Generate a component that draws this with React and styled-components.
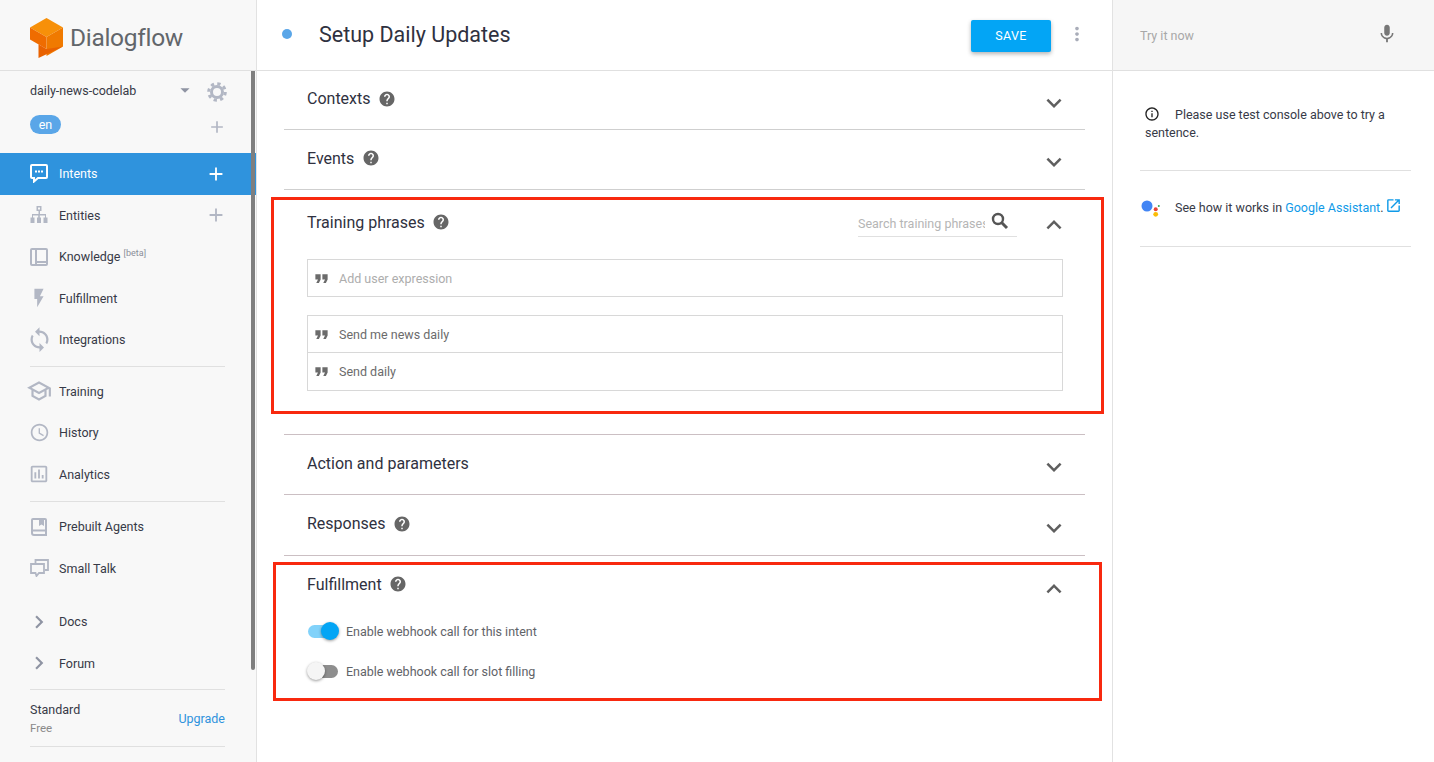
import React from "react";
import styled, { createGlobalStyle } from "styled-components";
import {
    MdAdd,
    MdArrowDropDown,
    MdChevronRight,
    MdExpandLess,
    MdExpandMore,
    MdFlashOn,
    MdFormatQuote,
    MdHelp,
    MdInfoOutline,
    MdMic,
    MdMoreVert,
    MdOpenInNew,
    MdOutlineAccessTime,
    MdOutlineAssessment,
    MdOutlineSchool,
    MdSync,
} from "react-icons/md";

const Logo = () => (
    <svg width="34" height="42" viewBox="0 0 34 42">
        <path d="M16.5 0 33 9.5 16.5 19 0 9.5z" fill="#f79009" />
        <path d="M0 9.5 16.5 19v12L0 21.5z" fill="#ef6c00" />
        <path d="M33 9.5V28.5L16.5 38V19z" fill="#f07a00" />
        <path d="M33 28.5 8.5 40V26.2l8 4.8z" fill="#e96200" />
    </svg>
);

const GearIcon = () => (
    <svg width="20" height="20" viewBox="0 0 20 20" fill="none" stroke="#b2b7c4">
        <circle cx="10" cy="10" r="5.500" strokeWidth="3" />
        <circle cx="10" cy="10" r="8.300" strokeWidth="3" strokeDasharray="3.300 3.220" />
    </svg>
);

const BubbleIcon = () => (
    <svg width="18" height="19" viewBox="0 0 18 19" fill="none" stroke="#fff" strokeWidth="2">
        <path d="M2 1h14a1 1 0 0 1 1 1v11a1 1 0 0 1-1 1H8l-4 3.500V14H2a1 1 0 0 1-1-1V2a1 1 0 0 1 1-1z" />
        <path d="M5 7.500h2M8 7.500h2M11 7.500h2" strokeWidth="2" />
    </svg>
);

const EntitiesIcon = () => (
    <svg width="20" height="20" viewBox="0 0 20 20" fill="#b2b7c4">
        <path d="M7.500 1h5v5H11v3h6v3.500h1.500V18h-4v-5.500H16V10.500h-5.200v2H12V18H8v-5.500h1.200v-2H4v2h1.500V18h-4v-5.500H3V9h6.500V6h-2zM9 2.500v2h2v-2z" />
    </svg>
);

const KnowledgeIcon = () => (
    <svg width="18" height="18" viewBox="0 0 18 18" fill="none" stroke="#b2b7c4" strokeWidth="2">
        <rect x="1" y="1" width="16" height="16" rx="1" />
        <path d="M6 1v16" />
        <path d="M6 14h11" />
    </svg>
);

const BookIcon = () => (
    <svg width="16" height="18" viewBox="0 0 16 18" fill="none" stroke="#b2b7c4" strokeWidth="2">
        <path d="M2 1h12a1 1 0 0 1 1 1v15H3a2 2 0 0 1-2-2V2a1 1 0 0 1 1-1z" />
        <path d="M1.500 12.500H15" />
        <path d="M8 1h5v7l-2.500-1.500L8 8z" fill="#b2b7c4" stroke="none" />
    </svg>
);

const TalkIcon = () => (
    <svg width="19" height="18" viewBox="0 0 19 18" fill="none" stroke="#b2b7c4" strokeWidth="1.800">
        <path d="M5.500 4V1h12.500v10h-3" />
        <path d="M1 5h13v9H9l-2.500 3-1-3H1z" />
    </svg>
);

const AssistantIcon = () => (
    <svg width="20" height="20" viewBox="0 0 20 20">
        <circle cx="6" cy="6" r="5.500" fill="#4285f4" />
        <circle cx="14.700" cy="9.300" r="2" fill="#ea4335" />
        <circle cx="14.700" cy="14.300" r="2.400" fill="#fbbc05" />
        <circle cx="17.800" cy="6" r="1" fill="#34a853" />
    </svg>
);

const SearchIcon = () => (
    <svg width="18" height="18" viewBox="0 0 18 18" fill="none" stroke="#555">
        <circle cx="7" cy="7" r="5" strokeWidth="2.400" />
        <path d="M10.800 10.800 16 16" strokeWidth="3" />
    </svg>
);

function NavRow({ label, icon, add, active }) {
    return (
        <Row $active={active}>
            <RowIcon $active={active}>{icon}</RowIcon>
            <RowLabel>{label}</RowLabel>
            {add && (
                <RowAdd $active={active}>
                    <MdAdd size={22} />
                </RowAdd>
            )}
        </Row>
    );
}

function Section({ title, head = 59, top, drop = 8, open, marked, noHelp, extra, children }) {
    return (
        <SectionBox $marked={marked}>
            <SectionHead $top={top} $height={head}>
                <SectionTitle>{title}</SectionTitle>
                {!noHelp && <MdHelp size={18} color="#666" />}
                <HeadRight>
                    {extra}
                    <Chevron $drop={drop}>
                        {open ? <MdExpandLess size={30} /> : <MdExpandMore size={30} />}
                    </Chevron>
                </HeadRight>
            </SectionHead>
            {children}
        </SectionBox>
    );
}

function Phrase({ text, muted }) {
    return (
        <PhraseRow>
            <QuoteMark>
                <MdFormatQuote size={21} />
            </QuoteMark>
            <PhraseText $muted={muted}>{text}</PhraseText>
        </PhraseRow>
    );
}

function App() {
    return (
        <>
            <GlobalStyle />
            <Page>
                <Sidebar>
                    <Brand>
                        <LogoSlot>
                            <Logo />
                        </LogoSlot>
                        <BrandName>Dialogflow</BrandName>
                    </Brand>
                    <AgentRow>
                        <AgentName>daily-news-codelab</AgentName>
                        <MdArrowDropDown size={22} color="#8f94a3" />
                        <Gear>
                            <GearIcon />
                        </Gear>
                    </AgentRow>
                    <LangRow>
                        <LangPill>en</LangPill>
                        <LangAdd>
                            <MdAdd size={20} />
                        </LangAdd>
                    </LangRow>
                    <NavRow label="Intents" icon={<BubbleIcon />} add active />
                    <NavRow label="Entities" icon={<EntitiesIcon />} add />
                    <NavRow
                        label={
                            <>
                                Knowledge <Beta>[beta]</Beta>
                            </>
                        }
                        icon={<KnowledgeIcon />}
                    />
                    <NavRow label="Fulfillment" icon={<MdFlashOn size={22} />} />
                    <NavRow label="Integrations" icon={<MdSync size={27} />} />
                    <Divider $top={5} $bottom={4} />
                    <NavRow label="Training" icon={<MdOutlineSchool size={26} />} />
                    <NavRow label="History" icon={<MdOutlineAccessTime size={21} />} />
                    <NavRow label="Analytics" icon={<MdOutlineAssessment size={22} />} />
                    <Divider $top={6} $bottom={4} />
                    <NavRow label="Prebuilt Agents" icon={<BookIcon />} />
                    <NavRow label="Small Talk" icon={<TalkIcon />} />
                    <Spacer />
                    <NavRow label="Docs" icon={<MdChevronRight size={26} color="#8f94a3" />} />
                    <NavRow label="Forum" icon={<MdChevronRight size={26} color="#8f94a3" />} />
                    <Divider $top={5} $bottom={0} />
                    <PlanRow>
                        <div>
                            <PlanName>Standard</PlanName>
                            <PlanPrice>Free</PlanPrice>
                        </div>
                        <Upgrade>Upgrade</Upgrade>
                    </PlanRow>
                    <Divider $top={0} $bottom={0} />
                    <ScrollThumb />
                </Sidebar>

                <Main>
                    <TopBar>
                        <StatusDot />
                        <PageTitle>Setup Daily Updates</PageTitle>
                        <SaveButton>SAVE</SaveButton>
                        <Kebab>
                            <MdMoreVert size={22} />
                        </Kebab>
                    </TopBar>
                    <Sections>
                        <Section title="Contexts" head={58} />
                        <Section title="Events" />
                        <Section
                            title="Training phrases"
                            top
                            drop={5}
                            open
                            marked
                            extra={
                                <SearchBox>
                                    <SearchInput placeholder="Search training phrases" />
                                    <SearchIcon />
                                </SearchBox>
                            }
                        >
                            <PhraseBody>
                                <PhraseList>
                                    <Phrase text="Add user expression" muted />
                                </PhraseList>
                                <PhraseList>
                                    <Phrase text="Send me news daily" />
                                    <Phrase text="Send daily" />
                                </PhraseList>
                            </PhraseBody>
                        </Section>
                        <Section title="Action and parameters" marked noHelp />
                        <Section title="Responses" head={60} marked />
                        <Section title="Fulfillment" drop={10} open>
                            <ToggleList>
                                <ToggleRow>
                                    <Track $on />
                                    <ToggleLabel>Enable webhook call for this intent</ToggleLabel>
                                </ToggleRow>
                                <ToggleRow>
                                    <Track />
                                    <ToggleLabel>Enable webhook call for slot filling</ToggleLabel>
                                </ToggleRow>
                            </ToggleList>
                        </Section>
                    </Sections>
                    <Highlight $x={14} $y={197} $w={833} $h={217} />
                    <Highlight $x={16} $y={562} $w={829} $h={139} />
                </Main>

                <Console>
                    <ConsoleBar>
                        <TryIt>Try it now</TryIt>
                        <MdMic size={22} color="#777" />
                    </ConsoleBar>
                    <ConsoleBody>
                        <Note>
                            <NoteIcon>
                                <MdInfoOutline size={16} color="#222" />
                            </NoteIcon>
                            Please use test console above to try a sentence.
                        </Note>
                        <Assistant>
                            <AssistantSlot>
                                <AssistantIcon />
                            </AssistantSlot>
                            <span>
                                See how it works in <ConsoleLink>Google Assistant</ConsoleLink>.{" "}
                                <ExternalLink>
                                    <MdOpenInNew size={17} />
                                </ExternalLink>
                            </span>
                        </Assistant>
                    </ConsoleBody>
                </Console>
            </Page>
        </>
    );
}
export default App;

const GlobalStyle = createGlobalStyle`
    html, body {
        margin: 0;
        padding: 0;
        background: #fff;
    }
    * {
        box-sizing: border-box;
    }
    body {
        font-family: Roboto, "Liberation Sans", sans-serif;
        overflow: hidden;
    }
`;

const Page = styled.div`
    display: flex;
    width: 1434px;
    height: 762px;
    overflow: hidden;
`;

const Sidebar = styled.aside`
    position: relative;
    width: 257px;
    flex: none;
    height: 100%;
    overflow: hidden;
    background: #f8f8f8;
    border-right: 1px solid #e2e2e2;
`;

const Brand = styled.div`
    display: flex;
    align-items: center;
    gap: 6px;
    height: 71px;
    padding: 4px 0 0 30px;
    border-bottom: 1px solid #e0e0e0;
`;

const LogoSlot = styled.span`
    display: flex;
    margin-top: 3px;
`;

const BrandName = styled.span`
    font-size: 24.5px;
    letter-spacing: -0.3px;
    color: #62666b;
`;

const AgentRow = styled.div`
    display: flex;
    align-items: center;
    height: 38px;
    padding-left: 30px;
`;

const AgentName = styled.span`
    width: 144px;
    font-size: 12.5px;
    color: #373a47;
`;

const Gear = styled.span`
    display: flex;
    margin-left: 11px;
    margin-top: 4px;
`;

const LangRow = styled.div`
    display: flex;
    align-items: flex-start;
    justify-content: space-between;
    height: 44px;
    padding: 6px 32px 0 30px;
`;

const LangPill = styled.span`
    width: 31px;
    height: 19px;
    border-radius: 10px;
    background: #5aa6e8;
    color: #fff;
    font-size: 12.5px;
    line-height: 19px;
    text-align: center;
`;

const LangAdd = styled.span`
    display: flex;
    margin-top: 2px;
    margin-right: -3px;
    color: #b2b7c4;
`;

const Row = styled.div`
    display: flex;
    align-items: center;
    height: 41.5px;
    padding: 0 29px 0 28px;
    background: ${(p) => (p.$active ? "#2f93dd" : "transparent")};
    color: ${(p) => (p.$active ? "#fff" : "#373a47")};
`;

const RowIcon = styled.span`
    display: flex;
    align-items: center;
    justify-content: center;
    width: 22px;
    margin-right: 9px;
    flex: none;
    color: ${(p) => (p.$active ? "#fff" : "#b2b7c4")};
    svg {
        flex: none;
    }
`;

const RowLabel = styled.span`
    flex: 1;
    font-size: 12.5px;
    white-space: nowrap;
`;

const Beta = styled.sup`
    font-size: 9px;
    color: #8a8e99;
    vertical-align: 5px;
    line-height: 0;
`;

const RowAdd = styled.span`
    display: flex;
    color: ${(p) => (p.$active ? "#fff" : "#b2b7c4")};
`;

const Divider = styled.div`
    height: 1px;
    margin: ${(p) => p.$top}px 31px ${(p) => p.$bottom}px 30px;
    background: #e0e0e0;
`;

const Spacer = styled.div`
    height: 12px;
`;

const PlanRow = styled.div`
    display: flex;
    align-items: center;
    justify-content: space-between;
    height: 56px;
    padding: 0 31px 0 30px;
`;

const PlanName = styled.div`
    font-size: 12.5px;
    color: #373a47;
    margin-bottom: 4px;
`;

const PlanPrice = styled.div`
    font-size: 11.5px;
    color: #8a8a8a;
`;

const Upgrade = styled.span`
    font-size: 12.5px;
    color: #2f93dd;
`;

const ScrollThumb = styled.div`
    position: absolute;
    top: 71px;
    right: 1px;
    width: 4px;
    height: 599px;
    border-radius: 0 0 3px 3px;
    background: #7f7f7f;
`;

const Main = styled.main`
    position: relative;
    width: 856px;
    flex: none;
    height: 100%;
    background: #fff;
    border-right: 1px solid #e2e2e2;
`;

const TopBar = styled.header`
    display: flex;
    align-items: center;
    height: 71px;
    padding: 0 24px 2px 25px;
    border-bottom: 1px solid #e0e0e0;
`;

const StatusDot = styled.span`
    width: 10px;
    height: 10px;
    border-radius: 50%;
    background: #5aa6e8;
    margin-right: 27px;
`;

const PageTitle = styled.h1`
    flex: 1;
    margin: 0;
    font-size: 21.5px;
    font-weight: 400;
    color: #2f3140;
`;

const SaveButton = styled.button`
    width: 80px;
    height: 32px;
    margin-top: 3px;
    border: none;
    border-radius: 2px;
    background: #03a5f5;
    color: #fff;
    font-family: inherit;
    font-size: 12.5px;
    letter-spacing: 0.3px;
    box-shadow: 0 2px 4px rgba(0, 0, 0, 0.3);
`;

const Kebab = styled.span`
    display: flex;
    margin-left: 15px;
    margin-top: -1px;
    color: #a9adb9;
`;

const Sections = styled.div`
    padding: 0 27px;
`;

const SectionBox = styled.section`
    border-bottom: 1px solid ${(p) => (p.$marked ? "#cbbfc3" : "#cfcfcf")};
    &:last-child {
        border-bottom: none;
    }
`;

const SectionHead = styled.div`
    display: flex;
    align-items: center;
    gap: 7.5px;
    height: ${(p) => p.$height}px;
    padding: 0 16px 3px 23px;
    margin-top: ${(p) => (p.$top ? 4 : 0)}px;
`;

const SectionTitle = styled.h2`
    margin: 0;
    font-size: 16px;
    font-weight: 400;
    color: #2f3140;
`;

const HeadRight = styled.div`
    display: flex;
    align-items: center;
    margin-left: auto;
`;

const Chevron = styled.span`
    display: flex;
    margin-top: ${(p) => p.$drop}px;
    color: #5f5f5f;
`;

const SearchBox = styled.div`
    display: flex;
    align-items: flex-start;
    width: 159px;
    height: 27px;
    margin-right: 22px;
    margin-top: 2px;
    border-bottom: 1px solid #e0e0e0;
    svg {
        flex: none;
        margin-top: 2px;
    }
`;

const SearchInput = styled.input`
    width: 127px;
    padding: 0;
    height: 24px;
    margin-top: 2px;
    margin-right: 6px;
    border: none;
    outline: none;
    background: transparent;
    font-family: inherit;
    font-size: 12.5px;
    color: #555;
    &::placeholder {
        color: #b5b5b5;
        opacity: 1;
    }
`;

const PhraseBody = styled.div`
    display: flex;
    flex-direction: column;
    gap: 18px;
    height: 175px;
    padding: 0 22px 0 23px;
    margin-top: 6px;
`;

const PhraseList = styled.div`
    border: 1px solid #d8d8d8;
    & > div + div {
        height: 38px;
        border-top: 1px solid #d8d8d8;
    }
`;

const PhraseRow = styled.div`
    display: flex;
    align-items: center;
    height: 36px;
    padding-left: 3px;
`;

const QuoteMark = styled.span`
    display: flex;
    width: 28px;
    color: #6b6b6b;
`;

const PhraseText = styled.span`
    font-size: 12.5px;
    color: ${(p) => (p.$muted ? "#adadad" : "#6b6b6b")};
`;

const ToggleList = styled.div`
    display: flex;
    flex-direction: column;
    gap: 18px;
    padding: 5px 0 0 24px;
`;

const ToggleRow = styled.div`
    display: flex;
    align-items: center;
    height: 22px;
`;

const Track = styled.span`
    position: relative;
    display: block;
    width: 30px;
    height: 13px;
    border-radius: 7px;
    margin-right: 8px;
    background: ${(p) => (p.$on ? "#81d2fa" : "#8e8e8e")};
    &::after {
        content: "";
        position: absolute;
        top: -3px;
        left: ${(p) => (p.$on ? "13px" : "-1px")};
        width: 18px;
        height: 18px;
        border-radius: 50%;
        background: ${(p) => (p.$on ? "#03a5f5" : "#f5f5f5")};
        box-shadow: 0 1px 3px rgba(0, 0, 0, 0.4);
    }
`;

const ToggleLabel = styled.span`
    font-size: 12.5px;
    color: #5f6368;
`;

const Highlight = styled.div`
    position: absolute;
    left: ${(p) => p.$x}px;
    top: ${(p) => p.$y}px;
    width: ${(p) => p.$w}px;
    height: ${(p) => p.$h}px;
    border: 3px solid #f8290f;
    pointer-events: none;
`;

const Console = styled.aside`
    flex: 1;
    height: 100%;
`;

const ConsoleBar = styled.div`
    display: flex;
    align-items: center;
    justify-content: space-between;
    height: 71px;
    padding: 0 36px 2px 27px;
    background: #f6f6f6;
    border-bottom: 1px solid #e0e0e0;
`;

const TryIt = styled.span`
    margin-top: 2px;
    font-size: 12.5px;
    color: #a8a8a8;
`;

const ConsoleBody = styled.div`
    padding: 0 23px 0 27px;
    font-size: 12.5px;
    color: #373a47;
`;

const Note = styled.div`
    height: 100px;
    padding: 35px 0 0 5px;
    line-height: 18px;
    border-bottom: 1px solid #e0e0e0;
`;

const NoteIcon = styled.span`
    display: inline-block;
    width: 31px;
    height: 14px;
    margin-left: -1px;
    line-height: 0;
    vertical-align: -3px;
`;

const Assistant = styled.div`
    display: flex;
    align-items: flex-start;
    height: 76px;
    padding-top: 26px;
    line-height: 18px;
    border-bottom: 1px solid #e0e0e0;
`;

const AssistantSlot = styled.span`
    display: block;
    width: 35px;
    padding: 3px 0 0 1px;
`;

const ConsoleLink = styled.span`
    color: #0f9ae8;
`;

const ExternalLink = styled.span`
    display: inline-block;
    height: 14px;
    line-height: 0;
    margin-left: -2px;
    vertical-align: -2px;
    color: #0f9ae8;
`;
